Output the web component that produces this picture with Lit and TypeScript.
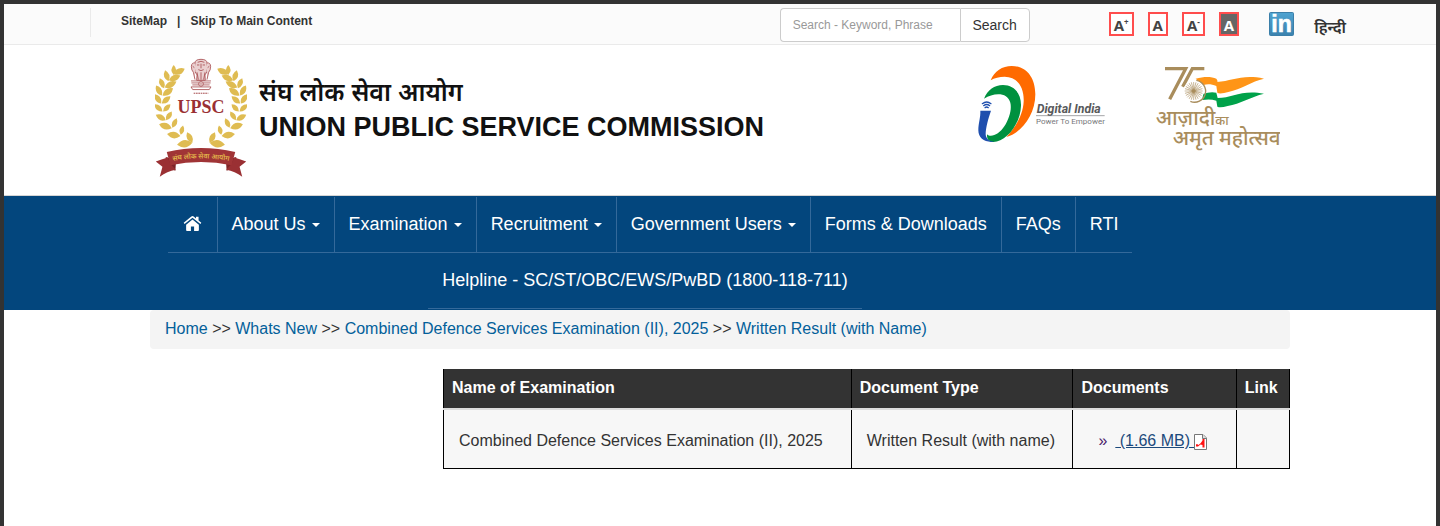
import { LitElement, html, css, svg } from "lit";
import { customElement } from "lit/decorators.js";

// Leaves of the left half of the wreath: base x, base y, tip x, tip y
const LEAVES: number[][] = [
  [86, 74, 86, 44], [86, 72, 119, 55],
  [70, 93, 60, 60], [71, 90, 106, 76],
  [57, 114, 44, 84], [59, 112, 94, 94],
  [50, 136, 33, 106], [52, 136, 84, 114],
  [48, 160, 29, 132], [50, 160, 76, 138],
  [52, 184, 28, 162], [54, 184, 76, 162],
  [62, 210, 32, 194], [63, 210, 80, 184],
  [80, 234, 42, 222], [82, 233, 95, 204],
  [106, 258, 66, 252], [107, 254, 114, 226],
  [142, 278, 96, 284], [142, 278, 126, 246],
];

interface MenuItem { label: string; menu?: boolean }

const MENU: MenuItem[] = [
  { label: "About Us", menu: true },
  { label: "Examination", menu: true },
  { label: "Recruitment", menu: true },
  { label: "Government Users", menu: true },
  { label: "Forms & Downloads" },
  { label: "FAQs" },
  { label: "RTI" },
  { label: "Helpline - SC/ST/OBC/EWS/PwBD (1800-118-711)" },
];

@customElement("upsc-emblem")
class UpscEmblem extends LitElement {
  static styles = css`
    :host { display: block; }
    svg { display: block; width: 92px; height: 121px; }
    .upsc { font: bold 54px "Liberation Serif", serif; fill: #9a2f33; }
    .motto { font: 600 21px "Noto Sans", "Noto Sans Devanagari", sans-serif; fill: #e3b84c; }
  `;
  private leaves() {
    return LEAVES.map(([bx, by, tx, ty]) => {
      const mx = (bx + tx) / 2, my = (by + ty) / 2;
      const nx = (by - ty) * 0.48, ny = (tx - bx) * 0.48;
      return svg`<path d="M${bx} ${by} Q${mx + nx} ${my + ny} ${tx} ${ty} Q${mx - nx} ${my - ny} ${bx} ${by}Z" />`;
    });
  }
  render() {
    return html`<svg viewBox="30 20 276 364" role="img" aria-label="UPSC emblem">
      <g fill="#dfbc52">${this.leaves()}</g>
      <g fill="#dfbc52" transform="translate(336 0) scale(-1 1)">${this.leaves()}</g>
      <g fill="none" stroke="#a5484b" stroke-width="2.4">
        <path d="M150 38 Q150 27 168 27 Q186 27 186 38 L188 52 Q188 66 180 74 L181 90 H155 L156 74 Q148 66 148 52Z" fill="#ead0d0" />
        <path d="M150 38 Q140 36 139 48 Q139 60 145 66 L150 88 M186 38 Q196 36 197 48 Q197 60 191 66 L186 88" fill="#ead0d0" />
        <path d="M158 36 Q168 30 178 36 M156 44 H163 M173 44 H180 M168 40 V54 M160 58 Q168 64 176 58 M156 66 L160 88 M168 66 V88 M180 66 L176 88 M143 48 L148 52 M193 48 L188 52" />
        <path d="M138 92 H198 M139 98 H197 M142 104 H194 M138 110 H198 L193 118 H143Z" />
        <circle cx="168" cy="101" r="7" fill="#fff" />
        <path d="M161 101 H175 M168 94 V108" stroke-width="1.5" />
        <path d="M146 129 H190" stroke-dasharray="5 2" stroke-width="3" />
      </g>
      <text class="upsc" x="168" y="187" text-anchor="middle">UPSC</text>
      <path fill="#7e2427" d="M62 321 L93 330 L91 362 L62 350Z M274 321 L243 330 L245 362 L274 350Z" />
      <path fill="#9a3033" d="M68 322 Q48 328 32 334 L52 350 L44 380 Q66 364 92 359 L76 342Z M268 322 Q288 328 304 334 L284 350 L292 380 Q270 364 244 359 L260 342Z" />
      <path fill="#a03436" d="M65 306 Q168 282 271 306 L260 346 Q168 326 76 346Z" />
      <defs><path id="arc" d="M66 336 Q168 314 270 336" /></defs>
      <text class="motto"><textPath href="#arc" startOffset="50%" text-anchor="middle">संघ लोक सेवा आयोग</textPath></text>
    </svg>`;
  }
}

@customElement("digital-india")
class DigitalIndia extends LitElement {
  static styles = css`
    :host { display: block; }
    svg { display: block; width: 133px; height: 78px; }
    .name { font: italic bold 37px Roboto, sans-serif; fill: #58595b; }
    .tag { font: 24px Roboto, sans-serif; fill: #77787b; }
  `;
  render() {
    return html`<svg viewBox="30 30 399 234" role="img" aria-label="Digital India, Power To Empower">
      <path fill="#ff6a00" d="M77 76 C88 48 112 33 140 33 C186 33 211 70 211 118 C211 180 169 234 124 246 C150 220 174 180 176 140 C178 98 158 65 119 65 C103 65 88 69 77 76Z" />
      <path fill="#00913f" d="M57 131 C68 105 88 90 114 90 C148 90 169 116 168 152 C166 210 122 261 85 261 C73 261 65 253 66 238 C78 250 103 237 118 214 C132 192 141 164 136 143 C128 111 87 112 57 131Z" />
      <path fill="#1f4fae" d="M46 167 H78 C70 190 62 218 62 238 C63 252 73 260 88 260 C60 264 40 250 40 226 C40 204 47 188 46 167Z" />
      <g fill="none" stroke="#1f4fae" stroke-width="4" stroke-linecap="round">
        <path d="M52 146 Q65 136 78 146 M56 152 Q65 145 74 152 M60 158 Q65 154 70 158" />
      </g>
      <text class="name" x="215" y="175">Digital India</text>
      <path d="M213 182 H419" stroke="#77787b" stroke-width="2" />
      <text class="tag" x="213" y="207">Power To Empower</text>
    </svg>`;
  }
}

@customElement("amrit-mahotsav")
class AmritMahotsav extends LitElement {
  static styles = css`
    :host { display: block; }
    svg { display: block; width: 125px; height: 88px; }
    text { font-family: "Noto Sans", "Noto Sans Devanagari", sans-serif; font-weight: 500; fill: #a98d5c; }
    .large { font-size: 62px; }
    .small { font-size: 38px; }
  `;
  render() {
    const spokes = Array.from({ length: 24 }, (_, i) =>
      svg`<path d="M0 -6 V-27" transform="rotate(${i * 15})" />`);
    return html`<svg viewBox="30 35 375 264" role="img" aria-label="75 आज़ादी का अमृत महोत्सव">
      <path fill="#ff9517" d="M152 76 C180 68 200 70 214 76 Q220 84 216 86 C262 84 290 62 357 76 C320 84 288 108 250 116 C236 120 222 122 217 118 L214 98 C200 92 186 92 176 95Z" />
      <path fill="#00a24a" d="M174 122 Q196 114 214 118 L218 134 C262 134 290 108 357 121 C318 130 286 152 248 158 Q226 164 217 160 L214 142 Q196 136 172 140Z" />
      <g fill="none" stroke="#a98d5c" stroke-width="10">
        <path d="M60 46 H122 L74 138" />
        <path d="M178 46 H142 L113 100" />
      </g>
      <g transform="translate(146 113)" fill="none" stroke="#a98d5c" stroke-width="1.8">
        <circle r="31" fill="#fff" stroke="none" /><path d="M8 -32 A33 33 0 1 1 -10 31" stroke-width="4" />
        ${spokes}<circle r="6" fill="#a98d5c" />
      </g>
      <text class="large" x="32" y="216">आज़ादी</text>
      <text class="small" x="211" y="216">का</text>
      <text class="large" x="83" y="276">अमृत महोत्सव</text>
    </svg>`;
  }
}

@customElement("app-root")
class AppRoot extends LitElement {
  static styles = css`
    * { box-sizing: border-box; }
    :host {
      display: block; box-sizing: border-box; min-height: 100vh;
      border: 4px solid #333; border-bottom: 0; background: #fff; color: #333;
      font: 16px/23px "Liberation Sans", "Noto Sans", "Noto Sans Devanagari", sans-serif;
    }
    a { color: inherit; text-decoration: none; }
    .topbar {
      display: flex; align-items: flex-start; height: 41px; padding: 4px 90px 0 86px;
      background: #fbfbfb; border-bottom: 1px solid #eaeaea;
    }
    .quick {
      display: flex; gap: 10px; height: 29px; padding-left: 30px; margin-right: auto;
      border-left: 1px solid #eaeaea; font-size: 12px; line-height: 26px; font-weight: bold;
    }
    .search { display: flex; width: 250px; height: 34px; margin-right: 79px; }
    .search input {
      flex: 1; min-width: 0; padding: 0 12px; border: 1px solid #ccc; border-right: 0;
      border-radius: 4px 0 0 4px; background: #fff; font: 12px "Liberation Sans", sans-serif; color: #333;
    }
    .search input::placeholder { color: #999; opacity: 1; }
    .search button {
      width: 70px; padding: 0; border: 1px solid #ccc; border-radius: 0 4px 4px 0;
      background: #fff; font: 14px "Liberation Sans", sans-serif; color: #333;
    }
    .sizes { display: flex; gap: 14px; margin: 4px 30px 0 0; }
    .sizes button {
      height: 24px; padding: 3px 3px 0; border: 2px solid #ff4d4d; background: #fff;
      font: bold 15px/17px "Open Sans", sans-serif; color: #444;
      display: flex;
    }
    .sizes sup { font-size: 8px; line-height: 10px; }
    .sizes .dark { background: #666; color: #fff; }
    .linkedin { margin: 4px 20px 0 0; }
    .linkedin svg { display: block; width: 25px; height: 24px; }
    .linkedin text { font: bold 23px "Liberation Sans", sans-serif; fill: #fff; stroke: #fff; stroke-width: 0.6px; }
    .lang { margin-top: 8px; font-size: 16px; line-height: 23px; font-weight: 600; }
    .container { max-width: 1140px; margin: 0 auto; }
    .masthead { display: flex; align-items: flex-start; height: 150px; padding: 12px 10px 0 5px; }
    .brand { margin: 18px auto 0 12px; color: #111; font-weight: bold; }
    .brand p { margin: 0; font-size: 25px; line-height: 34px; font-weight: 600; }
    .brand h1 { margin: 0; font-size: 27px; line-height: 36px; }
    .partners { display: flex; gap: 47px; padding-top: 8px; }
    .nav { background: #03467d; border-top: 1px solid #d5d5d5; padding: 1px 0; }
    .menu {
      display: flex; flex-wrap: wrap; justify-content: center; max-width: 990px;
      margin: 0; padding: 0; list-style: none;
    }
    .menu li { border-bottom: 1px solid #34699a; border-right: 1px solid #34699a; }
    .menu li:nth-last-child(-n + 2) { border-right: 0; }
    .menu .home { margin-left: 10px; }
    .menu a {
      display: flex; align-items: center; gap: 6px; height: 55px; padding: 0 14px 2px;
      color: #fff; font-size: 18px; line-height: 20px;
    }
    .caret { border: 4px solid transparent; border-top-color: #fff; border-bottom: 0; margin-top: 3px; }
    .home svg { display: block; width: 21px; height: 17px; }
    .crumbs { padding: 7px 15px 9px; background: #f4f4f4; border-radius: 4px; color: #333; }
    .crumbs a { color: #03609a; }
    .content { display: grid; grid-template-columns: 293fr 847fr; margin-top: 20px; }
    table { grid-column: 2; width: 100%; border-collapse: collapse; table-layout: fixed; }
    th, td { border: 1px solid #000; text-align: left; font-size: 16px; }
    th { padding: 8px 8px 9px; border-top: 0; border-bottom: 2px solid #ddd; background: #333; color: #fff; line-height: 22px; }
    td { padding: 20px 15px 16px; background: #f7f7f7; line-height: 22px; }
    .c1 { width: 48.2%; } .c2 { width: 26.2%; } .c3 { width: 19.3%; }
    .file { display: flex; gap: 8px; padding-left: 10px; color: #4b1a6b; }
    .file a { display: flex; color: #1c4a7c; text-decoration: underline; white-space: pre; }
    .file svg { width: 13px; height: 16px; margin-top: 4px; }
  `;

  render() {
    return html`
      <div class="topbar">
        <div class="quick"><a href="#">SiteMap</a><span>|</span><a href="#main">Skip To Main Content</a></div>
        <form class="search" role="search" @submit=${(e: Event) => e.preventDefault()}>
          <input type="text" aria-label="Search" placeholder="Search - Keyword, Phrase" />
          <button type="submit">Search</button>
        </form>
        <div class="sizes">
          <button type="button" aria-label="Increase font size">A<sup>+</sup></button>
          <button type="button" aria-label="Normal font size">A</button>
          <button type="button" aria-label="Decrease font size">A<sup>-</sup></button>
          <button type="button" class="dark" aria-label="High contrast">A</button>
        </div>
        <a class="linkedin" href="#" aria-label="LinkedIn"><svg viewBox="0 0 25 24">
          <defs><linearGradient id="sky" x2="0" y2="1"><stop stop-color="#4fa3d1" /><stop offset="1" stop-color="#3b82ae" /></linearGradient></defs>
          <rect x=".5" y=".5" width="24" height="23" rx="1" fill="url(#sky)" stroke="#3b7fa9" />
          <text x="12.5" y="20" text-anchor="middle">in</text>
        </svg></a>
        <a class="lang" href="#" lang="hi">हिन्दी</a>
      </div>

      <header class="container masthead">
        <upsc-emblem></upsc-emblem>
        <div class="brand">
          <p lang="hi">संघ लोक सेवा आयोग</p>
          <h1>UNION PUBLIC SERVICE COMMISSION</h1>
        </div>
        <div class="partners">
          <digital-india></digital-india>
          <amrit-mahotsav></amrit-mahotsav>
        </div>
      </header>

      <nav class="nav">
        <div class="container">
          <ul class="menu">
            <li class="home"><a href="#" aria-label="Home"><svg viewBox="0 0 19 16" fill="#fff">
              <path d="M9.5 4.2 L3.5 9.2 V14.2 Q3.5 15 4.3 15 H8 V10.8 H11 V15 H14.7 Q15.5 15 15.5 14.2 V9.2Z" />
              <path d="M9.5 .9 Q10.1 .9 10.6 1.3 L12.8 3.2 V1.6 H15.2 V5.2 L17.8 7.4 L17 8.4 L9.5 2.5 L2 8.4 L1.2 7.4 L8.4 1.3 Q8.9 .9 9.5 .9Z" />
            </svg></a></li>
            ${MENU.map((m) => html`<li><a href="#">${m.label}${m.menu ? html`<span class="caret"></span>` : ""}</a></li>`)}
          </ul>
        </div>
      </nav>

      <main id="main" class="container">
        <div class="crumbs"><a href="#">Home</a> &gt;&gt; <a href="#">Whats New</a> &gt;&gt; <a href="#">Combined Defence Services Examination (II), 2025</a> &gt;&gt; <a href="#">Written Result (with Name)</a></div>
        <div class="content">
          <table>
            <thead>
              <tr><th class="c1">Name of Examination</th><th class="c2">Document Type</th><th class="c3">Documents</th><th>Link</th></tr>
            </thead>
            <tbody>
              <tr>
                <td>Combined Defence Services Examination (II), 2025</td>
                <td>Written Result (with name)</td>
                <td><div class="file">»<a href="#"> (1.66 MB) <svg viewBox="0 0 13 16">
                  <path d="M.5 .5 H9 L12.5 4 V15.5 H.5Z" fill="#fff" stroke="#777" />
                  <path d="M8.5 .5 V4.5 H12.5" fill="#ddd" stroke="#777" />
                  <path d="M2 12.5 V10.5 L3 10 L4.5 11 Q7 9.5 8.5 6.5 V5 H10.5 V13.5 H8.5 V11 L6.5 10.5 L4 12.5Z" fill="#f11" />
                </svg></a></div></td>
                <td></td>
              </tr>
            </tbody>
          </table>
        </div>
      </main>
    `;
  }
}
